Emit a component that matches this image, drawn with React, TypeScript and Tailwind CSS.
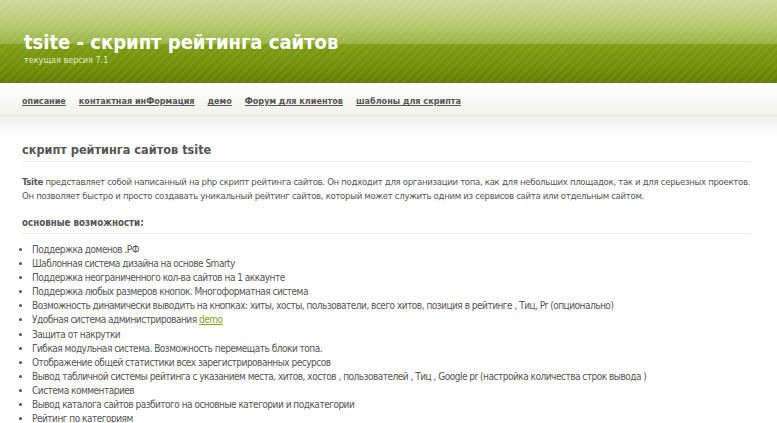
const navLinks = [
  "описание",
  "контактная инФормация",
  "демо",
  "Форум для клиентов",
  "шаблоны для скрипта",
];

const features: React.ReactNode[] = [
  "Поддержка доменов .РФ",
  "Шаблонная система дизайна на основе Smarty",
  "Поддержка неограниченного кол-ва сайтов на 1 аккаунте",
  "Поддержка любых размеров кнопок. Многоформатная система",
  "Возможность динамически выводить на кнопках: хиты, хосты, пользователи, всего хитов, позиция в рейтинге , Тиц, Pr (опционально)",
  <>
    Удобная система администрирования{" "}
    <a href="#" className="text-[#7aa526] underline">
      demo
    </a>
  </>,
  "Защита от накрутки",
  "Гибкая модульная система. Возможность перемещать блоки топа.",
  "Отображение общей статистики всех зарегистрированных ресурсов",
  "Вывод табличной системы рейтинга с указанием места, хитов, хостов , пользователей , Тиц , Google pr (настройка количества строк вывода )",
  "Система комментариев",
  "Вывод каталога сайтов разбитого на основные категории и подкатегории",
  "Рейтинг по категориям",
];

export default function App() {
  return (
    <div className="min-h-screen bg-white font-['DejaVu_Sans_Condensed','DejaVu_Sans',sans-serif] text-[#555]">
      {/* header */}
      <header className="relative h-[83px] bg-[linear-gradient(to_bottom,#cdd99a_0%,#b5ca6e_30%,#9ab445_52%,#7d9c12_54%,#6f8f06_80%,#5f7d00_100%)]">
        <div className="absolute inset-0 bg-[repeating-linear-gradient(135deg,rgba(255,255,255,0.06)_0px,rgba(255,255,255,0.06)_3px,transparent_3px,transparent_6px)]" />
        <div className="relative px-[24px] pt-[30px]">
          <h1 className="text-[20px] font-bold leading-[24px] text-white">
            tsite - скрипт рейтинга сайтов
          </h1>
          <div className="text-[9px] leading-[12px] text-[#e4ecc8]">
            текущая версия 7.1
          </div>
        </div>
      </header>

      {/* nav */}
      <nav className="h-[33px] border-b border-[#e6e8de] bg-[linear-gradient(to_bottom,#ffffff,#f1f2ea)]">
        <ul className="flex gap-[13px] px-[22px] pt-[12px] text-[9px] font-bold leading-[12px]">
          {navLinks.map((l) => (
            <li key={l}>
              <a href="#" className="text-[#555] underline">
                {l}
              </a>
            </li>
          ))}
        </ul>
      </nav>
      <div className="h-[20px] bg-[linear-gradient(to_bottom,#eff0e8,#ffffff)]" />

      {/* content */}
      <main className="w-[751px] pl-[22px]">
        <h2 className="mt-[6px] border-b border-[#f0f0ea] pb-[3px] text-[12.6px] font-bold leading-[16px] text-[#555]">
          скрипт рейтинга сайтов tsite
        </h2>
        <p className="mt-[13px] text-[9.5px] leading-[14px] tracking-[-0.3px] text-[#555]">
          <b>Tsite</b> представляет собой написанный на php скрипт рейтинга
          сайтов. Он подходит для организации топа, как для небольших
          площадок, так и для серьезных проектов. Он позволяет быстро и просто
          создавать уникальный рейтинг сайтов, который может служить одним из
          сервисов сайта или отдельным сайтом.
        </p>
        <h3 className="mt-[13px] border-b border-[#f0f0ea] pb-[3px] text-[9.7px] font-bold leading-[14px] text-[#555]">
          основные возможности:
        </h3>
        <ul className="mt-[9px] list-disc pl-[10px] text-[10px] leading-[14.1px] tracking-[-0.5px] text-[#555]">
          {features.map((f, i) => (
            <li key={i}>{f}</li>
          ))}
        </ul>
      </main>
    </div>
  );
}
